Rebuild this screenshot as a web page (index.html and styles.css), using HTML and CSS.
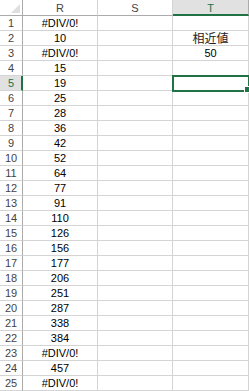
FILE: index.html
```html
<!DOCTYPE html>
<html lang="ja">
<head>
    <meta charset="UTF-8">
    <meta name="viewport" content="width=device-width, initial-scale=1.0">
    <title>Sheet1</title>
    <link rel="stylesheet" href="styles.css">
</head>
<body>
    <div class="sheet" id="sheet">
        <div class="corner"><span class="corner-mark"></span></div>
        <div class="col-head">R</div>
        <div class="col-head">S</div>
        <div class="col-head active">T</div>
    </div>

    <script>
        // 列Rの値 (エラーはそのまま表示)
        const values = ['#DIV/0!', '10', '#DIV/0!', '15', '19', '25', '28', '36', '42', '52',
            '64', '77', '91', '110', '126', '156', '177', '206', '251', '287',
            '338', '384', '#DIV/0!', '457', '#DIV/0!'];
        const colT = { 2: '相近値', 3: '50' };
        const selectedRow = 5;

        const sheet = document.getElementById('sheet');

        values.forEach((val, i) => {
            const row = i + 1;

            const head = document.createElement('div');
            head.className = 'row-head' + (row === selectedRow ? ' active' : '');
            head.textContent = row;
            sheet.appendChild(head);

            const r = document.createElement('div');
            r.className = 'cell';
            r.textContent = val;
            sheet.appendChild(r);

            const s = document.createElement('div');
            s.className = 'cell';
            sheet.appendChild(s);

            const t = document.createElement('div');
            t.className = 'cell' + (row === selectedRow ? ' selected' : '');
            t.textContent = colT[row] || '';
            if (colT[row] && /[^\x00-\x7f]/.test(colT[row])) t.classList.add('cjk');
            if (row === selectedRow) {
                const handle = document.createElement('span');
                handle.className = 'fill-handle';
                t.appendChild(handle);
            }
            sheet.appendChild(t);
        });
    </script>
</body>
</html>
```

FILE: styles.css
```css
body {
    margin: 0;
    padding: 0;
    background: #ffffff;
    overflow: hidden;
    font-family: "Liberation Sans", Arial, sans-serif;
    font-size: 11px;
    color: #000000;
}

.sheet {
    display: grid;
    grid-template-columns: 23px 75px 75px 76px;
    grid-template-rows: 16px;
    grid-auto-rows: 15px;
    width: 249px;
}

.sheet > div {
    box-sizing: border-box;
    display: flex;
    align-items: center;
    justify-content: center;
    line-height: 1;
    white-space: nowrap;
}

.corner {
    position: relative;
    background: #ffffff;
    border-right: 1px solid #ababab;
    border-bottom: 1px solid #ababab;
}

.corner-mark {
    position: absolute;
    right: 2px;
    bottom: 2px;
    width: 0;
    height: 0;
    border-left: 9px solid transparent;
    border-bottom: 9px solid #dfdfdf;
}

.col-head {
    background: #ffffff;
    color: #444444;
    border-right: 1px solid #d4d4d4;
    border-bottom: 1px solid #ababab;
    padding-top: 1px;
}

.col-head.active {
    background: #e1e1e1;
    color: #217346;
    border-right: 1px solid #ababab;
    border-bottom: 2px solid #217346;
    padding-top: 2px;
}

.row-head {
    background: #ffffff;
    color: #444444;
    border-right: 1px solid #ababab;
    border-bottom: 1px solid #d4d4d4;
}

.row-head.active {
    background: #e1e1e1;
    color: #217346;
    border-right: 2px solid #217346;
    padding-left: 1px;
}

.cell {
    position: relative;
    border-right: 1px solid #d4d4d4;
    border-bottom: 1px solid #d4d4d4;
}

.cell.cjk {
    font-family: "Noto Sans CJK JP", "Liberation Sans", sans-serif;
    font-size: 12px;
    color: #222222;
}

.cell.selected {
    outline: 2px solid #217346;
    outline-offset: -1px;
    z-index: 1;
}

.fill-handle {
    position: absolute;
    right: -3px;
    bottom: -3px;
    width: 5px;
    height: 5px;
    background: #217346;
    border: 1px solid #ffffff;
}
```
